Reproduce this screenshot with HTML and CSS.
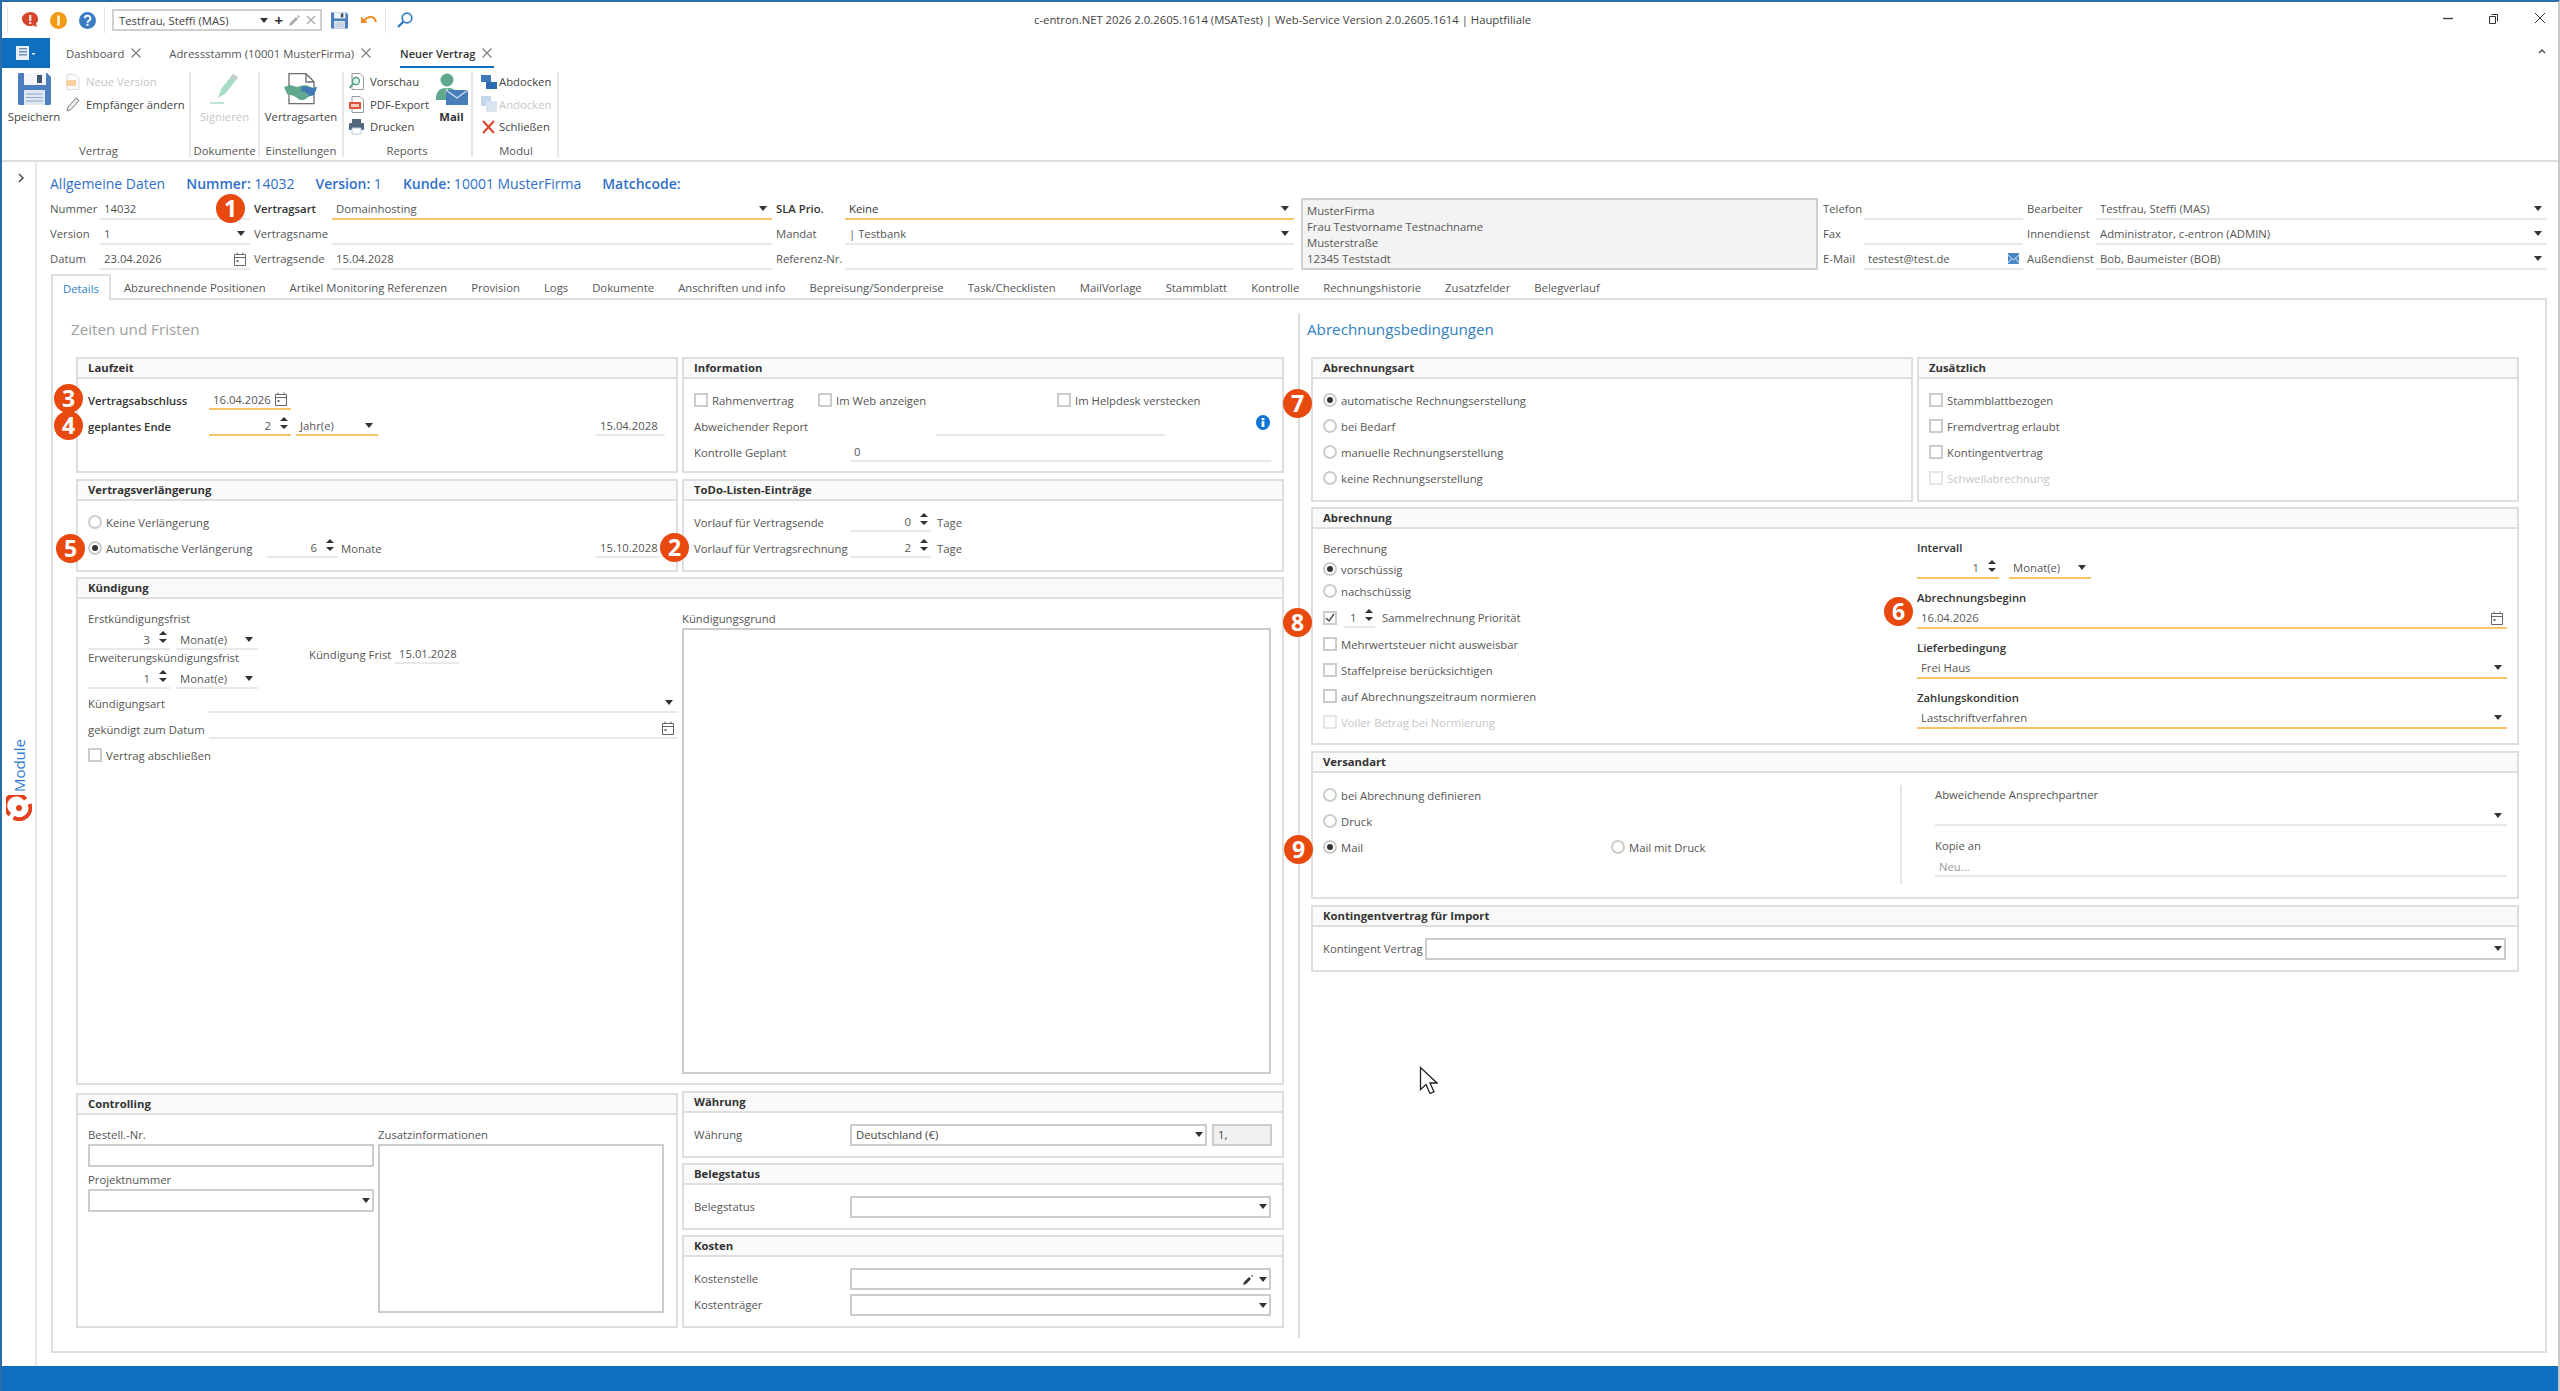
FILE: index.html
```html
<!DOCTYPE html>
<html lang="de">
<head>
  <meta charset="UTF-8">
  <title>c-entron.NET 2026</title>
  <link rel="stylesheet" href="styles.css">
</head>
<body>
<div class="window">
  <!-- Title bar -->
  <div class="titlebar">
    <div class="sep-v first"></div>
    <svg class="qa" width="18" height="16" viewBox="0 0 18 16"><path d="M9 0a8 7 0 0 1 6 11.6L16 15l-4-1.5A8 7 0 1 1 9 0z" fill="#d8432b"/><rect x="8" y="3" width="2.4" height="6" fill="#f7d8d0"/><rect x="8" y="10" width="2.4" height="2" fill="#f7d8d0"/></svg>
    <svg class="qa" width="17" height="17" viewBox="0 0 17 17"><circle cx="8.5" cy="8.5" r="8.5" fill="#f39a12"/><rect x="7.2" y="3.5" width="2.6" height="10" fill="#fff1d2"/></svg>
    <svg class="qa" width="17" height="17" viewBox="0 0 17 17"><circle cx="8.5" cy="8.5" r="8.5" fill="#3a7dc4"/><path d="M5.8 6.3a2.8 2.6 0 1 1 4 2.4c-1 .6-1.3 1-1.3 2.1" fill="none" stroke="#fff" stroke-width="1.9"/><rect x="7.5" y="11.8" width="2" height="2" fill="#fff"/></svg>
    <div class="sep-v"></div>
    <div class="user-combo">
      <span class="grow">Testfrau, Steffi (MAS)</span>
      <i class="caret"></i>
      <b class="plus">+</b>
      <svg width="11" height="11" viewBox="0 0 11 11"><path d="M0 11l1-3 6-6 2 2-6 6zM8 1l1-1 2 2-1 1z" fill="#a9a9a9"/></svg>
      <svg width="10" height="10" viewBox="0 0 10 10"><path d="M1 1l8 8M9 1l-8 8" stroke="#a9a9a9" stroke-width="1.3"/></svg>
    </div>
    <svg class="qa-save" width="17" height="17" viewBox="0 0 33 32"><use href="#floppy"/></svg>
    <svg class="qa-undo" width="16" height="11" viewBox="0 0 16 11"><path d="M3.5 6C5 3 7.5 2 9.5 2c2.8 0 4.8 2 5.5 5" fill="none" stroke="#ef8a1d" stroke-width="2"/><path d="M0 1.5l6.5 6.5H0z" fill="#ef8a1d"/></svg>
    <div class="sep-v"></div>
    <svg class="qa-search" width="16" height="16" viewBox="0 0 16 16"><circle cx="10" cy="6" r="4.8" fill="none" stroke="#2f7cc9" stroke-width="1.7"/><path d="M6.4 9.6L1 15" stroke="#2f7cc9" stroke-width="2.2"/></svg>
    <div class="win-title">c-entron.NET 2026 2.0.2605.1614 (MSATest) | Web-Service Version 2.0.2605.1614 | Hauptfiliale</div>
    <div class="win-controls">
      <svg width="12" height="12" viewBox="0 0 12 12"><path d="M1 6.5h10" stroke="#333" stroke-width="1.3"/></svg>
      <svg width="12" height="12" viewBox="0 0 12 12"><path d="M3.5 2.5h6v7M1.5 4.5h6v7h-6z" fill="none" stroke="#333"/></svg>
      <svg width="12" height="12" viewBox="0 0 12 12"><path d="M1 1l10 10M11 1L1 11" stroke="#333"/></svg>
    </div>
  </div>

  <!-- Application tabs -->
  <div class="app-tabs">
    <div class="app-menu">
      <svg width="20" height="14" viewBox="0 0 20 14"><rect x="0" y="0" width="13" height="14" fill="#e6eef7"/><rect x="3" y="2" width="8" height="1.5" fill="#6b8fb5"/><rect x="3" y="5" width="8" height="1.5" fill="#6b8fb5"/><rect x="3" y="8" width="8" height="1.5" fill="#6b8fb5"/><rect x="16" y="7" width="3" height="1.5" fill="#e6eef7"/></svg>
    </div>
    <div class="app-tab tab-dash">Dashboard<svg class="tab-x"><use href="#tabx"/></svg></div>
    <div class="app-tab tab-addr">Adressstamm (10001 MusterFirma)<svg class="tab-x"><use href="#tabx"/></svg></div>
    <div class="app-tab active">Neuer Vertrag<svg class="tab-x"><use href="#tabx"/></svg></div>
    <svg class="collapse" width="8" height="6" viewBox="0 0 8 6"><path d="M1 5l3-3 3 3" fill="none" stroke="#444" stroke-width="1.3"/></svg>
  </div>

  <!-- Ribbon -->
  <div class="ribbon">
    <div class="rb-group rb-vertrag">
      <div class="rb-body">
        <div class="rb-big w-52">
          <svg width="33" height="32" viewBox="0 0 33 32"><use href="#floppy"/></svg>
          <span>Speichern</span>
        </div>
        <div class="rb-col">
          <div class="rb-small off"><svg width="14" height="16" viewBox="0 0 14 16"><path d="M1 .5h8l4 4v11H1z" fill="#fbfbfb" stroke="#dcdcdc"/><rect x="0" y="6" width="10" height="6" fill="#f8cf9f"/></svg><span>Neue Version</span></div>
          <div class="rb-small"><svg width="14" height="16" viewBox="0 0 14 16"><path d="M1 15l1-4 8-9 3 2.5-8 9z" fill="#e9e9e9" stroke="#808080"/></svg><span>Empfänger ändern</span></div>
        </div>
      </div>
      <div class="rb-label">Vertrag</div>
    </div>
    <div class="rb-group rb-dok">
      <div class="rb-body center">
        <div class="rb-big off">
          <svg width="30" height="32" viewBox="0 0 30 32"><path d="M9 25l3-9L24 1l5 3.5-12 15.5z" fill="#a8dcc4"/><path d="M24 1l5 3.5-2 2.5-5-3.5z" fill="#c9c9c9"/><path d="M1 30h14" stroke="#a8dcc4" stroke-width="1.5"/></svg>
          <span>Signieren</span>
        </div>
      </div>
      <div class="rb-label">Dokumente</div>
    </div>
    <div class="rb-group rb-einst">
      <div class="rb-body center">
        <div class="rb-big">
          <svg width="34" height="32" viewBox="0 0 34 32"><path d="M5 .7h17l8 8v22H5z" fill="#fff" stroke="#6d6d6d" stroke-width="1.3"/><path d="M22 1v8h8" fill="none" stroke="#6d6d6d" stroke-width="1.3"/><path d="M0 14l6-2 7 2 3-1 6-1 7 3 4-1-3 8-4 1-6 4h-4l-6-4-7-2z" fill="#5fa88c"/><path d="M18 13l11 2 4-1-3 8-4 1-6-5-3 1z" fill="#3f78b8"/></svg>
          <span>Vertragsarten</span>
        </div>
      </div>
      <div class="rb-label">Einstellungen</div>
    </div>
    <div class="rb-group rb-reports">
      <div class="rb-body">
        <div class="rb-col w-86">
          <div class="rb-small"><svg width="15" height="17" viewBox="0 0 15 17"><path d="M3 .5h8l3.5 3.5v12.5H3z" fill="#fff" stroke="#9a9a9a"/><circle cx="7" cy="8" r="3.5" fill="#dff3e9" stroke="#4f9d7f" stroke-width="1.3"/><path d="M4.5 10.5L.5 15" stroke="#4f9d7f" stroke-width="1.8"/></svg><span>Vorschau</span></div>
          <div class="rb-small"><svg width="15" height="17" viewBox="0 0 15 17"><path d="M3 .5h8l3.5 3.5v12.5H3z" fill="#fff" stroke="#9a9a9a"/><rect x="0" y="6" width="12" height="7" fill="#e0533d"/><rect x="2" y="8" width="8" height="3" fill="#f8c9bf"/></svg><span>PDF-Export</span></div>
          <div class="rb-small"><svg width="15" height="17" viewBox="0 0 15 17"><rect x="3" y="1" width="9" height="4" fill="#50677e"/><rect x="0" y="5" width="15" height="7" rx="1" fill="#50677e"/><path d="M3 10h9v6H3z" fill="#fff" stroke="#b7cde2"/></svg><span>Drucken</span></div>
        </div>
        <div class="rb-big mail">
          <svg width="33" height="32" viewBox="0 0 33 32"><circle cx="12" cy="7" r="6.5" fill="#5fa88c"/><path d="M1 26c0-8 4-11 11-11s8 2 9 5v7H1z" fill="#5fa88c"/><path d="M12 15l-1.5 4 1.5 8 1.5-8z" fill="#fff"/><rect x="11" y="17" width="22" height="15" fill="#4a7ebb"/><path d="M11 17l11 8 11-8" fill="none" stroke="#cfe0f2" stroke-width="1.3"/></svg>
          <span>Mail</span>
        </div>
      </div>
      <div class="rb-label">Reports</div>
    </div>
    <div class="rb-group rb-modul">
      <div class="rb-body">
        <div class="rb-col">
          <div class="rb-small short"><svg width="16" height="14" viewBox="0 0 16 14"><rect x="0" y="0" width="10" height="7" fill="#3f78b8"/><rect x="5" y="7" width="11" height="7" fill="#2d6bb0"/></svg><span>Abdocken</span></div>
          <div class="rb-small short off"><svg width="16" height="16" viewBox="0 0 16 16"><rect x="0" y="0" width="10" height="10" fill="#c5d7ea"/><rect x="5" y="5" width="11" height="11" fill="#d9e5f1"/></svg><span>Andocken</span></div>
          <div class="rb-small short"><svg width="16" height="14" viewBox="0 0 16 14"><path d="M2 1l11 12M13 1L2 13" stroke="#d8432b" stroke-width="2"/></svg><span>Schließen</span></div>
        </div>
      </div>
      <div class="rb-label">Modul</div>
    </div>
  </div>

  <!-- Main area -->
  <div class="main">
    <div class="sidebar">
      <svg class="side-chevron" width="8" height="10" viewBox="0 0 8 10"><path d="M2 1l4 4-4 4" fill="none" stroke="#444" stroke-width="1.4"/></svg>
      <div class="module-label">Module</div>
      <svg class="module-logo" width="26" height="26" viewBox="0 0 26 26"><path d="M19.5 4.5A11 11 0 1 0 4 19.5" fill="none" stroke="#e5401c" stroke-width="4"/><path d="M7.5 22.5A11 11 0 0 0 23.5 9" fill="none" stroke="#e5401c" stroke-width="4"/><circle cx="13" cy="13" r="3" fill="#e5401c"/></svg>
    </div>

    <div class="workspace">
      <div class="doc-head">
        <span>Allgemeine Daten</span>
        <span><b>Nummer:</b> 14032</span>
        <span><b>Version:</b> 1</span>
        <span><b>Kunde:</b> 10001 MusterFirma</span>
        <span><b>Matchcode:</b></span>
      </div>

      <div class="head-form">
        <span class="lbl">Nummer</span><div class="field">14032</div>
        <span class="lbl ind strong">Vertragsart</span><div class="field req">Domainhosting<i class="caret push"></i></div>
        <span class="lbl ind strong">SLA Prio.</span><div class="field req dark">Keine<i class="caret push"></i></div>
        <div class="address">MusterFirma<br>Frau Testvorname Testnachname<br>Musterstraße<br>12345 Teststadt</div>
        <span class="lbl">Telefon</span><div class="field"></div>
        <span class="lbl ind">Bearbeiter</span><div class="field">Testfrau, Steffi (MAS)<i class="caret push"></i></div>

        <span class="lbl">Version</span><div class="field">1<i class="caret push"></i></div>
        <span class="lbl ind">Vertragsname</span><div class="field"></div>
        <span class="lbl ind">Mandat</span><div class="field">| Testbank<i class="caret push"></i></div>
        <span class="lbl">Fax</span><div class="field"></div>
        <span class="lbl ind">Innendienst</span><div class="field">Administrator, c-entron (ADMIN)<i class="caret push"></i></div>

        <span class="lbl">Datum</span><div class="field">23.04.2026<svg class="cal push"><use href="#cal"/></svg></div>
        <span class="lbl ind">Vertragsende</span><div class="field">15.04.2028</div>
        <span class="lbl ind">Referenz-Nr.</span><div class="field"></div>
        <span class="lbl">E-Mail</span><div class="field">testest@test.de<svg class="push" width="11" height="11" viewBox="0 0 11 11"><rect width="11" height="11" fill="#4a86c5"/><path d="M0 2l5.5 5L11 2M0 10l3.5-4.5M11 10L7.5 5.5" fill="none" stroke="#dbe8f5"/></svg></div>
        <span class="lbl ind">Außendienst</span><div class="field">Bob, Baumeister (BOB)<i class="caret push"></i></div>
      </div>

      <div class="doc-tabs">
        <div class="doc-tab active">Details</div>
        <div class="doc-tab">Abzurechnende Positionen</div>
        <div class="doc-tab">Artikel Monitoring Referenzen</div>
        <div class="doc-tab">Provision</div>
        <div class="doc-tab">Logs</div>
        <div class="doc-tab">Dokumente</div>
        <div class="doc-tab">Anschriften und info</div>
        <div class="doc-tab">Bepreisung/Sonderpreise</div>
        <div class="doc-tab">Task/Checklisten</div>
        <div class="doc-tab">MailVorlage</div>
        <div class="doc-tab">Stammblatt</div>
        <div class="doc-tab">Kontrolle</div>
        <div class="doc-tab">Rechnungshistorie</div>
        <div class="doc-tab">Zusatzfelder</div>
        <div class="doc-tab">Belegverlauf</div>
      </div>

      <div class="panel">
        <!-- Left: Zeiten und Fristen -->
        <div class="col-left">
          <h2 class="section-title gray">Zeiten und Fristen</h2>

          <div class="pair h-116">
            <section class="group">
              <div class="group-head">Laufzeit</div>
              <div class="group-body">
                <div class="row">
                  <span class="lbl strong w-121">Vertragsabschluss</span>
                  <div class="field req w-82">16.04.2026<svg class="cal push"><use href="#cal"/></svg></div>
                </div>
                <div class="row">
                  <span class="lbl strong w-121">geplantes Ende</span>
                  <div class="field req spin w-82">2<span class="spinner"><i></i><i></i></span></div>
                  <div class="field req w-82 ml-5">Jahr(e)<i class="caret push"></i></div>
                  <div class="field w-69 ml-218">15.04.2028</div>
                </div>
              </div>
            </section>
            <section class="group">
              <div class="group-head">Information</div>
              <div class="group-body">
                <div class="row">
                  <label class="opt w-124"><i class="check"></i>Rahmenvertrag</label>
                  <label class="opt w-239"><i class="check"></i>Im Web anzeigen</label>
                  <label class="opt"><i class="check"></i>Im Helpdesk verstecken</label>
                </div>
                <div class="row">
                  <span class="lbl w-242">Abweichender Report</span>
                  <div class="field w-229"></div>
                  <svg class="info" width="14" height="15" viewBox="0 0 14 15"><ellipse cx="7" cy="7.5" rx="7" ry="7.5" fill="#1274d4"/><rect x="5.6" y="3" width="2.8" height="2.2" fill="#fff"/><rect x="5.6" y="6.2" width="2.8" height="5.8" fill="#fff"/></svg>
                </div>
                <div class="row">
                  <span class="lbl w-156">Kontrolle Geplant</span>
                  <div class="field w-421">0</div>
                </div>
              </div>
            </section>
          </div>

          <div class="pair h-93 mt-6">
            <section class="group">
              <div class="group-head">Vertragsverlängerung</div>
              <div class="group-body">
                <div class="row"><label class="opt"><i class="radio"></i>Keine Verlängerung</label></div>
                <div class="row">
                  <label class="opt w-179"><i class="radio on"></i>Automatische Verlängerung</label>
                  <div class="field spin w-70">6<span class="spinner"><i></i><i></i></span></div>
                  <span class="lbl w-255 ml-4">Monate</span>
                  <div class="field w-64">15.10.2028</div>
                </div>
              </div>
            </section>
            <section class="group">
              <div class="group-head">ToDo-Listen-Einträge</div>
              <div class="group-body">
                <div class="row">
                  <span class="lbl w-156">Vorlauf für Vertragsende</span>
                  <div class="field spin w-81">0<span class="spinner"><i></i><i></i></span></div>
                  <span class="lbl ml-6">Tage</span>
                </div>
                <div class="row">
                  <span class="lbl w-156">Vorlauf für Vertragsrechnung</span>
                  <div class="field spin w-81">2<span class="spinner"><i></i><i></i></span></div>
                  <span class="lbl ml-6">Tage</span>
                </div>
              </div>
            </section>
          </div>

          <section class="group h-508 mt-5">
            <div class="group-head">Kündigung</div>
            <div class="group-body kuendigung">
              <div class="kd-left">
                <div class="kd-top">
                  <div class="kd-terms">
                    <div class="cap">Erstkündigungsfrist</div>
                    <div class="row-tight">
                      <div class="field spin w-82">3<span class="spinner"><i></i><i></i></span></div>
                      <div class="field w-82 ml-6">Monat(e)<i class="caret push"></i></div>
                    </div>
                    <div class="cap">Erweiterungskündigungsfrist</div>
                    <div class="row-tight">
                      <div class="field spin w-82">1<span class="spinner"><i></i><i></i></span></div>
                      <div class="field w-82 ml-6">Monat(e)<i class="caret push"></i></div>
                    </div>
                  </div>
                  <div class="kd-date">
                    <span class="lbl w-86">Kündigung Frist</span>
                    <div class="field w-64">15.01.2028</div>
                  </div>
                </div>
                <div class="row mt-2">
                  <span class="lbl w-121">Kündigungsart</span>
                  <div class="field w-469"><i class="caret push"></i></div>
                </div>
                <div class="row">
                  <span class="lbl w-121">gekündigt zum Datum</span>
                  <div class="field w-469"><svg class="cal push"><use href="#cal"/></svg></div>
                </div>
                <div class="row"><label class="opt"><i class="check"></i>Vertrag abschließen</label></div>
              </div>
              <div class="kd-right">
                <div class="cap">Kündigungsgrund</div>
                <div class="box area-grund"></div>
              </div>
            </div>
          </section>

          <div class="pair h-237 mt-6">
            <section class="group mt-2">
              <div class="group-head">Controlling</div>
              <div class="group-body controlling">
                <div class="ctl-left">
                  <div class="cap">Bestell.-Nr.</div>
                  <div class="box h-23"></div>
                  <div class="cap mt-5">Projektnummer</div>
                  <div class="box h-23"><i class="caret push"></i></div>
                </div>
                <div class="ctl-right">
                  <div class="cap">Zusatzinformationen</div>
                  <div class="box area-info"></div>
                </div>
              </div>
            </section>
            <div class="stack">
              <section class="group h-67">
                <div class="group-head">Währung</div>
                <div class="group-body boxed">
                  <span class="lbl w-156">Währung</span>
                  <div class="box w-357">Deutschland (€)<i class="caret push"></i></div>
                  <div class="box w-60 ml-5 filled">1,</div>
                </div>
              </section>
              <section class="group h-67">
                <div class="group-head">Belegstatus</div>
                <div class="group-body boxed">
                  <span class="lbl w-156">Belegstatus</span>
                  <div class="box w-421"><i class="caret push"></i></div>
                </div>
              </section>
              <section class="group h-93">
                <div class="group-head">Kosten</div>
                <div class="group-body boxed-two">
                  <div class="box-row">
                    <span class="lbl w-156">Kostenstelle</span>
                    <div class="box w-421"><svg class="push pen" width="11" height="11" viewBox="0 0 11 11"><path d="M0 11l1-3 5-5 2 2-5 5zM8 2l1-1 1 1-1 1z" fill="#333"/></svg><i class="caret"></i></div>
                  </div>
                  <div class="box-row">
                    <span class="lbl w-156">Kostenträger</span>
                    <div class="box w-421"><i class="caret push"></i></div>
                  </div>
                </div>
              </section>
            </div>
          </div>
        </div>

        <!-- Right: Abrechnungsbedingungen -->
        <div class="col-right">
          <h2 class="section-title blue">Abrechnungsbedingungen</h2>
          <div class="col-right-inner">
            <div class="pair h-145">
              <section class="group">
                <div class="group-head">Abrechnungsart</div>
                <div class="group-body">
                  <div class="row"><label class="opt"><i class="radio on"></i>automatische Rechnungserstellung</label></div>
                  <div class="row"><label class="opt"><i class="radio"></i>bei Bedarf</label></div>
                  <div class="row"><label class="opt"><i class="radio"></i>manuelle Rechnungserstellung</label></div>
                  <div class="row"><label class="opt"><i class="radio"></i>keine Rechnungserstellung</label></div>
                </div>
              </section>
              <section class="group">
                <div class="group-head">Zusätzlich</div>
                <div class="group-body">
                  <div class="row"><label class="opt"><i class="check"></i>Stammblattbezogen</label></div>
                  <div class="row"><label class="opt"><i class="check"></i>Fremdvertrag erlaubt</label></div>
                  <div class="row"><label class="opt"><i class="check"></i>Kontingentvertrag</label></div>
                  <div class="row"><label class="opt off"><i class="check"></i>Schwellabrechnung</label></div>
                </div>
              </section>
            </div>

            <section class="group h-238 mt-5">
              <div class="group-head">Abrechnung</div>
              <div class="group-body abrechnung">
                <div class="ab-left">
                  <div class="cap-18">Berechnung</div>
                  <div class="row-22"><label class="opt"><i class="radio on"></i>vorschüssig</label></div>
                  <div class="row-22"><label class="opt"><i class="radio"></i>nachschüssig</label></div>
                  <div class="row mt-4">
                    <label class="opt w-21"><i class="check on"><svg width="10" height="10" viewBox="0 0 10 10"><path d="M1 5l3 3 5-7" fill="none" stroke="#444" stroke-width="1.3"/></svg></i></label>
                    <div class="field spin-left w-31">1<span class="spinner"><i></i><i></i></span></div>
                    <span class="lbl ml-7 up-1">Sammelrechnung Priorität</span>
                  </div>
                  <div class="row"><label class="opt"><i class="check"></i>Mehrwertsteuer nicht ausweisbar</label></div>
                  <div class="row"><label class="opt"><i class="check"></i>Staffelpreise berücksichtigen</label></div>
                  <div class="row"><label class="opt"><i class="check"></i>auf Abrechnungszeitraum normieren</label></div>
                  <div class="row"><label class="opt off"><i class="check"></i>Voller Betrag bei Normierung</label></div>
                </div>
                <div class="ab-right">
                  <div class="cap-18 semi">Intervall</div>
                  <div class="row-tight">
                    <div class="field req spin w-82">1<span class="spinner"><i></i><i></i></span></div>
                    <div class="field req w-82 ml-10">Monat(e)<i class="caret push"></i></div>
                  </div>
                  <div class="cap-18 semi mt-10">Abrechnungsbeginn</div>
                  <div class="field req">16.04.2026<svg class="cal push"><use href="#cal"/></svg></div>
                  <div class="cap-18 semi mt-10">Lieferbedingung</div>
                  <div class="field req">Frei Haus<i class="caret push"></i></div>
                  <div class="cap-18 semi mt-10">Zahlungskondition</div>
                  <div class="field req">Lastschriftverfahren<i class="caret push"></i></div>
                </div>
              </div>
            </section>

            <section class="group h-148 mt-6">
              <div class="group-head">Versandart</div>
              <div class="group-body versand">
                <div class="vs-left">
                  <div class="row"><label class="opt"><i class="radio"></i>bei Abrechnung definieren</label></div>
                  <div class="row"><label class="opt"><i class="radio"></i>Druck</label></div>
                  <div class="row">
                    <label class="opt w-288"><i class="radio on"></i>Mail</label>
                    <label class="opt"><i class="radio"></i>Mail mit Druck</label>
                  </div>
                </div>
                <div class="vs-right">
                  <div class="cap-19">Abweichende Ansprechpartner</div>
                  <div class="field"><i class="caret push"></i></div>
                  <div class="cap-19 mt-10">Kopie an</div>
                  <div class="field muted">Neu...</div>
                </div>
              </div>
            </section>

            <section class="group h-67 mt-6">
              <div class="group-head">Kontingentvertrag für Import</div>
              <div class="group-body boxed">
                <span class="lbl w-102">Kontingent Vertrag</span>
                <div class="box w-1081"><i class="caret push"></i></div>
              </div>
            </section>
          </div>
        </div>
      </div>
    </div>
  </div>

  <div class="statusbar"></div>

  <!-- Numbered callouts and mouse pointer over the screenshot -->
  <span class="marker m1">1</span>
  <span class="marker m2">2</span>
  <span class="marker m3">3</span>
  <span class="marker m4">4</span>
  <span class="marker m5">5</span>
  <span class="marker m6">6</span>
  <span class="marker m7">7</span>
  <span class="marker m8">8</span>
  <span class="marker m9">9</span>
  <svg class="pointer" width="19" height="29" viewBox="0 0 19 29"><path d="M1.5 1.5v22l5.5-5 4 9 4-1.8-4-8.7h7z" fill="#fff" stroke="#222" stroke-width="1.3"/></svg>
</div>

<svg class="defs" width="0" height="0">
  <defs>
    <symbol id="floppy" viewBox="0 0 33 32">
      <path d="M0 1.5C0 .7.7 0 1.5 0H29l4 4v26.5c0 .8-.7 1.5-1.5 1.5h-30C.7 32 0 31.3 0 30.5z" fill="#4d7fbe"/>
      <rect x="6" y="0" width="22" height="12" fill="#f4f6f9"/>
      <rect x="19" y="2" width="5" height="8" fill="#44566b"/>
      <rect x="6" y="17" width="21" height="15" fill="#dfe7f1"/>
      <path d="M8 21h17M8 24.5h17M8 28h17" stroke="#8aa7cb"/>
    </symbol>
    <symbol id="tabx" viewBox="0 0 10 10">
      <path d="M.5.5l9 9M9.5.5l-9 9" stroke="#808080" stroke-width="1.3"/>
    </symbol>
    <symbol id="cal" viewBox="0 0 12 14">
      <path d="M.5 2.5h11v11H.5zM.5 5.5h11" fill="none" stroke="#666"/>
      <path d="M3 .5v2M9 .5v2" stroke="#666"/>
      <rect x="2.5" y="8" width="2" height="2" fill="#666"/>
    </symbol>
  </defs>
</svg>
</body>
</html>
```

FILE: styles.css
```css
:root {
  --blue: #106ebe;
  --line: #dedede;
  --line-soft: #e8e8e8;
  --box: #cccccc;
  --text: #555555;
  --dark: #333333;
  --off: #c6c6c6;
  --req: #fbc466;
  --link: #2f6fc9;
}

* {
  box-sizing: border-box;
}

html, body {
  margin: 0;
  padding: 0;
  height: 100%;
  overflow: hidden;
  background: #fff;
}

body {
  font-family: "Open Sans", "Noto Sans", sans-serif;
  font-size: 11.3px;
  color: var(--text);
}

.window {
  position: relative;
  display: flex;
  flex-direction: column;
  height: 1391px;
  border-top: 2px solid #2a6da8;
  border-left: 2px solid #2a6da8;
  border-right: 2px solid #c9c9c9;
}

/* Title bar */
.titlebar {
  position: relative;
  display: flex;
  align-items: center;
  height: 36px;
  flex: none;
}

.sep-v {
  width: 1px;
  height: 26px;
  background: #e2e2e2;
  margin: 0 7px 0 8px;
}

.sep-v.first {
  margin: 0 13px 0 5px;
}

.qa {
  margin-right: 12px;
}

.qa:first-of-type {
  margin-right: 11px;
}

.qa + .sep-v {
  margin-left: -4px;
}

.user-combo {
  display: flex;
  align-items: center;
  gap: 6px;
  width: 210px;
  height: 22px;
  padding: 0 4px 0 5px;
  border: 2px solid #cfcfcf;
  color: #444;
}

.grow {
  flex: 1;
}

.plus {
  font-size: 15px;
  line-height: 14px;
  color: #333;
}

.qa-save {
  margin-left: 9px;
}

.qa-undo {
  margin-left: 13px;
}

.qa-search {
  margin-left: 4px;
}

.win-title {
  position: absolute;
  left: 1032px;
  top: 10px;
  color: #444;
  white-space: nowrap;
}

.win-controls {
  position: absolute;
  right: 12px;
  top: 10px;
  display: flex;
  gap: 34px;
}

/* App tabs */
.app-tabs {
  display: flex;
  align-items: center;
  height: 30px;
  flex: none;
  font-size: 11.3px;
}

.app-menu {
  display: flex;
  align-items: center;
  justify-content: center;
  width: 48px;
  height: 30px;
  background: var(--blue);
}

.app-tab {
  display: flex;
  align-items: center;
  height: 30px;
  gap: 7px;
}

.tab-dash {
  margin-left: 16px;
}

.tab-addr {
  margin-left: 28px;
}

.app-tab.active {
  margin-left: 29px;
  padding-right: 2px;
  font-size: 11px;
  font-weight: 600;
  color: #333;
  border-bottom: 2px solid var(--blue);
  border-top: 2px solid transparent;
}

.tab-x {
  width: 10px;
  height: 10px;
}

.collapse {
  margin-left: auto;
  margin-right: 12px;
  margin-top: -4px;
}

/* Ribbon */
.ribbon {
  display: flex;
  height: 94px;
  flex: none;
  padding-top: 4px;
  border-bottom: 2px solid #dcdcdc;
}

.rb-group {
  display: flex;
  flex-direction: column;
  height: 85px;
  border-right: 2px solid #e6e6e6;
}

.rb-vertrag { width: 189px; padding-left: 6px; }
.rb-dok { width: 69px; }
.rb-einst { width: 84px; }
.rb-reports { width: 129px; padding-left: 5px; }
.rb-modul { width: 86px; padding-left: 8px; }

.rb-body {
  display: flex;
  flex: 1;
  gap: 6px;
}

.rb-body.center {
  justify-content: center;
}

.rb-label {
  height: 14px;
  line-height: 15px;
  text-align: center;
}

.rb-reports .rb-label,
.rb-modul .rb-label {
  margin-right: 6px;
}

.rb-big {
  display: flex;
  flex-direction: column;
  align-items: center;
  padding-top: 1px;
  white-space: nowrap;
  color: #444;
}

.rb-big span {
  margin-top: 4px;
  line-height: 16px;
}

.rb-big.off,
.rb-small.off {
  color: var(--off);
}

.rb-big.mail {
  margin-left: -6px;
  width: 33px;
  font-weight: 700;
  color: #333;
}

.rb-col {
  display: flex;
  flex-direction: column;
  margin-top: -1.5px;
}

.rb-small {
  display: flex;
  align-items: center;
  gap: 6px;
  height: 22.5px;
  color: #444;
  white-space: nowrap;
}

.rb-small.short {
  gap: 2px;
}

/* Main */
.main {
  display: flex;
  flex: 1;
  min-height: 0;
}

.sidebar {
  display: flex;
  flex-direction: column;
  align-items: center;
  width: 35px;
  flex: none;
  border-right: 2px solid #e6e6e6;
}

.side-chevron {
  align-self: flex-end;
  margin: 11px 10px 0 0;
}

.module-label {
  margin-top: 556px;
  margin-right: -1px;
  writing-mode: vertical-rl;
  transform: rotate(180deg);
  font-size: 15px;
  line-height: 20px;
  color: #2b7cd3;
}

.module-logo {
  margin-top: 3px;
}

.workspace {
  flex: 1;
  min-width: 0;
  padding: 11px 11px 13px 13px;
  display: flex;
  flex-direction: column;
}

.doc-head {
  display: flex;
  gap: 21px;
  height: 23px;
  font-size: 14px;
  line-height: 22px;
  color: var(--link);
}

.doc-head b {
  font-weight: 600;
}

/* Head form: label/field pairs in fixed tracks */
.head-form {
  display: grid;
  grid-template-columns: 50px 150px 82px 440px 73px 449px 529px 41px 159px 73px 451px;
  grid-template-rows: repeat(3, 25px);
  flex: none;
}

.head-form .lbl {
  line-height: 25px;
  white-space: nowrap;
}

.head-form .lbl.ind {
  padding-left: 4px;
}

.address {
  grid-column: 7;
  grid-row: 1 / span 3;
  width: 517px;
  height: 72px;
  margin: 2px 0 0 7px;
  padding: 3px 4px 0 4px;
  background: #f3f3f3;
  border: 2px solid #cfcfcf;
  line-height: 16px;
  color: #555;
}

.lbl {
  flex: none;
  line-height: 26px;
  white-space: nowrap;
}

.lbl.up-1 {
  line-height: 24px;
}

.lbl.strong,
.cap-18.semi {
  font-weight: 600;
  color: var(--dark);
}

.field {
  display: flex;
  align-items: center;
  flex: none;
  height: 22px;
  padding: 2px 4px 0;
  border-bottom: 2px solid var(--line-soft);
  white-space: nowrap;
  color: #555;
}

.head-form .field {
  height: 24px;
  padding-top: 3px;
}

.field.req {
  border-bottom-color: var(--req);
}

.field.dark {
  color: #333;
}

.field.muted {
  color: #9a9a9a;
}

.field.spin {
  justify-content: flex-end;
  padding-right: 3px;
}

.field.spin-left {
  padding-left: 6px;
}

.push {
  margin-left: auto;
}

.caret {
  display: block;
  flex: none;
  width: 0;
  height: 0;
  border-left: 4.5px solid transparent;
  border-right: 4.5px solid transparent;
  border-top: 5px solid #333;
}

.field .caret.push {
  margin-right: 1px;
}

.cal {
  width: 12px;
  height: 14px;
  flex: none;
}

.spinner {
  display: flex;
  flex-direction: column;
  gap: 4px;
  margin-left: 9px;
  margin-top: -4px;
}

.spinner i {
  display: block;
  width: 0;
  height: 0;
  border-left: 4px solid transparent;
  border-right: 4px solid transparent;
}

.spinner i:first-child {
  border-bottom: 4px solid #333;
}

.spinner i:last-child {
  border-top: 4px solid #333;
}

/* Inner tabs */
.doc-tabs {
  display: flex;
  height: 26px;
  flex: none;
  margin-top: 3px;
  margin-left: 1px;
  border-bottom: 2px solid var(--line);
}

.doc-tab {
  height: 24px;
  padding: 0 12px;
  line-height: 27px;
  white-space: nowrap;
}

.doc-tab.active {
  height: 26px;
  margin-right: 1px;
  padding: 0 10px;
  color: #2f7fc1;
  background: #fff;
  border: 2px solid var(--line);
  border-bottom: none;
  line-height: 25px;
}

.panel {
  display: flex;
  flex: 1;
  margin-left: 1px;
  border-left: 2px solid var(--line);
  border-right: 2px solid var(--line);
  border-bottom: 2px solid var(--line);
}

.col-left {
  width: 1208px;
  margin-left: 23px;
  flex: none;
}

.col-right {
  width: 1221px;
  flex: none;
  margin: 13px 0 13px 14px;
  border-left: 2px solid var(--line);
  padding-left: 7px;
}

.col-right-inner {
  margin-left: 4px;
  width: 1208px;
}

.section-title {
  margin: 0;
  font-size: 15.2px;
  font-weight: 400;
  line-height: 22px;
}

.section-title.gray {
  margin: 18px 0 17px -5px;
  color: #a0a0a0;
}

.section-title.blue {
  margin: 5px 0 17px;
  color: #2f7fc1;
}

.pair {
  display: grid;
  grid-template-columns: 602px 602px;
  gap: 4px;
}

.stack {
  display: flex;
  flex-direction: column;
  gap: 5px;
}

.group {
  display: flex;
  flex-direction: column;
  border: 2px solid var(--line);
  min-width: 0;
}

.group-head {
  height: 20px;
  flex: none;
  padding-left: 10px;
  line-height: 17px;
  font-weight: 700;
  color: var(--dark);
  background: #fafafa;
  border-bottom: 2px solid var(--line);
}

.group-body {
  flex: 1;
  padding: 9px 10px 0;
  min-height: 0;
}

.row {
  display: flex;
  align-items: flex-start;
  height: 26px;
}

.row-tight {
  display: flex;
  align-items: flex-start;
  height: 22px;
}

.row-22 {
  display: flex;
  align-items: center;
  height: 22px;
}

.row .opt {
  height: 24px;
}

.opt {
  display: flex;
  align-items: center;
  flex: none;
  gap: 4px;
  white-space: nowrap;
}

.opt.off {
  color: var(--off);
}

.opt.off .check {
  border-color: #e6e6e6;
}

.check,
.radio {
  display: flex;
  align-items: center;
  justify-content: center;
  flex: none;
  width: 14px;
  height: 14px;
  border: 2px solid var(--box);
}

.radio {
  border-radius: 50%;
}

.radio.on::after {
  content: "";
  width: 6px;
  height: 6px;
  border-radius: 50%;
  background: #333;
}

.info {
  margin: 1px 0 0 91px;
}

.cap {
  height: 17px;
  line-height: 16px;
  white-space: nowrap;
}

.cap-18 {
  height: 18px;
  line-height: 18px;
}

.cap-19 {
  height: 19px;
  line-height: 19px;
}

.kuendigung {
  display: flex;
  gap: 4px;
  padding-top: 12px;
}

.kd-left {
  width: 590px;
  flex: none;
}

.kd-top {
  display: flex;
}

.kd-terms {
  width: 170px;
}

.kd-date {
  display: flex;
  align-items: flex-start;
  margin: 31px 0 0 51px;
}

.kd-right {
  width: 589px;
  flex: none;
}

.box {
  display: flex;
  align-items: center;
  flex: none;
  height: 22px;
  padding: 0 2.5px 0 4px;
  background: #fff;
  border: 2px solid var(--box);
  color: #444;
}

.box.filled {
  background: #f1f1f1;
}

.area-grund {
  height: 446px;
}

.controlling {
  display: flex;
  gap: 4px;
  padding-top: 12px;
}

.ctl-left {
  width: 286px;
}

.ctl-right {
  width: 286px;
}

.area-info {
  height: 169px;
}

.boxed {
  display: flex;
  align-items: center;
  padding-top: 0;
  padding-bottom: 0;
}

.boxed-two {
  display: flex;
  flex-direction: column;
  gap: 4px;
  padding-top: 11px;
}

.box-row {
  display: flex;
  align-items: center;
  height: 22px;
}

.box-row .lbl {
  line-height: 22px;
}

.pen {
  margin-right: 5px;
}

.abrechnung {
  display: flex;
  padding-top: 11px;
}

.ab-left {
  width: 594px;
  flex: none;
}

.ab-right {
  width: 590px;
  flex: none;
  margin-top: -1.5px;
}

.versand {
  display: flex;
  align-items: flex-start;
}

.vs-left {
  width: 577px;
  flex: none;
  margin-top: 1px;
}

.vs-right {
  width: 607px;
  height: 99px;
  margin-top: 3px;
  padding-left: 33px;
  border-left: 2px solid #e6e6e6;
}

.statusbar {
  height: 25px;
  flex: none;
  background: var(--blue);
}

/* Callouts */
.marker {
  position: absolute;
  width: 29px;
  height: 29px;
  border-radius: 50%;
  background: #e8490f;
  color: #fff;
  font-family: "Open Sans", sans-serif;
  font-size: 23px;
  font-weight: 700;
  line-height: 28px;
  text-align: center;
}

/* Offsets are page coordinates minus the window's 2px border */
.m1 { left: 214px; top: 192px; }
.m2 { left: 658px; top: 531px; }
.m3 { left: 52px; top: 382px; }
.m4 { left: 52px; top: 409px; }
.m5 { left: 54px; top: 532px; }
.m6 { left: 1882px; top: 595px; }
.m7 { left: 1281px; top: 387px; }
.m8 { left: 1281px; top: 606px; }
.m9 { left: 1282px; top: 833px; }

.pointer {
  position: absolute;
  left: 1417px;
  top: 1064px;
}

.defs {
  position: absolute;
}

/* Spacing and width helpers */
.mt-2 { margin-top: 2px; }
.mt-4 { margin-top: 4px; }
.mt-5 { margin-top: 5px; }
.mt-6 { margin-top: 6px; }
.mt-10 { margin-top: 10px; }
.ml-4 { margin-left: 4px; }
.ml-5 { margin-left: 5px; }
.ml-6 { margin-left: 6px; }
.ml-7 { margin-left: 7px; }
.ml-10 { margin-left: 10px; }
.ml-218 { margin-left: 218px; }
.w-21 { width: 21px; }
.w-31 { width: 31px; }
.w-52 { width: 52px; }
.w-60 { width: 60px; }
.w-64 { width: 64px; }
.w-69 { width: 69px; }
.w-70 { width: 70px; }
.w-81 { width: 81px; }
.w-82 { width: 82px; }
.w-86 { width: 86px; }
.w-102 { width: 102px; }
.w-121 { width: 121px; }
.w-124 { width: 124px; }
.w-156 { width: 156px; }
.w-179 { width: 179px; }
.w-229 { width: 229px; }
.w-239 { width: 239px; }
.w-242 { width: 242px; }
.w-255 { width: 255px; }
.w-288 { width: 288px; }
.w-357 { width: 357px; }
.w-421 { width: 421px; }
.w-469 { width: 469px; }
.w-1081 { width: 1081px; }
.h-23 { height: 23px; }
.h-67 { height: 67px; }
.h-93 { height: 93px; }
.h-116 { height: 116px; }
.h-145 { height: 145px; }
.h-148 { height: 148px; }
.h-237 { height: 237px; }
.h-238 { height: 238px; }
.h-508 { height: 508px; }
```
